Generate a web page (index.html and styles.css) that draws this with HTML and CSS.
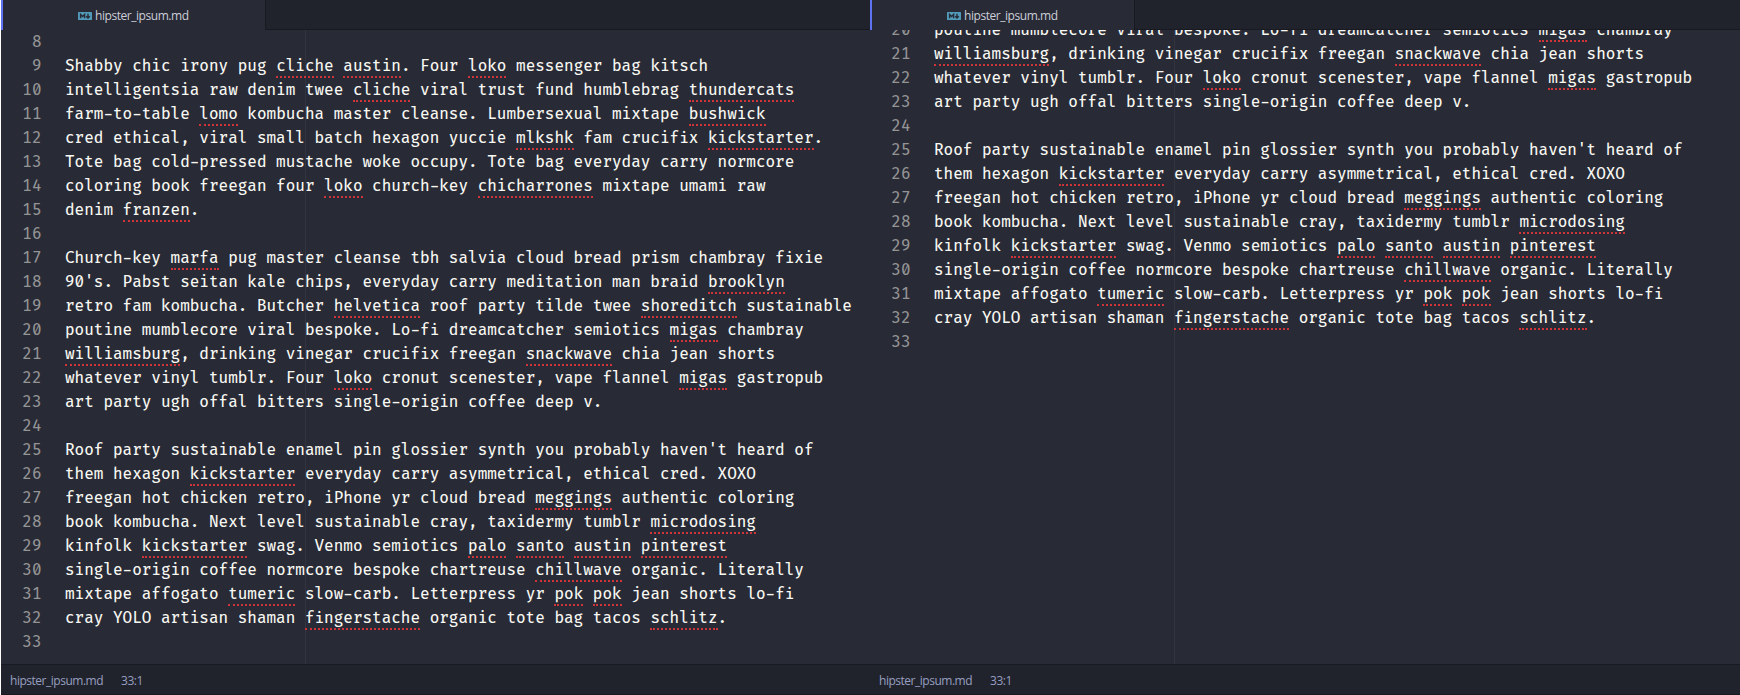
FILE: index.html
```html
<!DOCTYPE html>
<html lang="en">
<head>
<meta charset="utf-8">
<title>hipster_ipsum.md</title>
<link rel="stylesheet" href="styles.css">
</head>
<body>
<main class="workspace" id="workspace"></main>
<template id="pane-template">
  <section class="pane">
    <header class="tab-bar">
      <div class="tab">
        <svg class="tab-icon" viewBox="0 0 14 8" width="14" height="8"><rect width="14" height="8" rx="0.5" fill="#519aba"/><path d="M2.6 6.3V2.4L4.6 4.5L6.6 2.4V6.3M10 1.8V6M8.2 4.2L10 6L11.8 4.2" fill="none" stroke="#282a36" stroke-width="1.4"/></svg>
        <span class="tab-title">hipster_ipsum.md</span>
      </div>
    </header>
    <div class="editor"><div class="lines"></div></div>
    <footer class="status-bar"><span class="file">hipster_ipsum.md</span><span class="cursor">33:1</span></footer>
  </section>
</template>
<script src="editor.js"></script>
</body>
</html>
```
FILE: styles.css
```css
body {
  margin: 0;
  background: #fff;
}
.workspace {
  display: flex;
  height: 695px;
  padding-left: 1px;
  box-sizing: border-box;
  overflow: hidden;
}
.pane {
  flex: none;
  width: 869px;
  box-sizing: border-box;
  display: flex;
  flex-direction: column;
  background: #282a36;
  overflow: hidden;
}
.pane:last-child {
  width: 870px;
}
.tab-bar {
  flex: none;
  height: 30px;
  box-sizing: border-box;
  background: #21232c;
  border-bottom: 1px solid #191a21;
}
.tab {
  width: 265px;
  height: 30px;
  box-sizing: border-box;
  display: flex;
  align-items: center;
  padding: 0 0 0 75px;
  gap: 3px;
  background: #282a36;
  border-left: 2px solid #5f73f2;
  border-right: 1px solid #191a21;
}
.tab-icon {
  margin-top: 2px;
}
.tab-title {
  font: 12px/16px "Segoe UI", "Open Sans", sans-serif;
  color: #ccced8;
  margin-top: 1px;
  letter-spacing: -0.45px;
}
.editor {
  flex: 1;
  min-height: 0;
  overflow: hidden;
  font: 450 15.6px/26px "Fira Code", "DejaVu Sans Mono", monospace;
  color: #f8f8f2;
  background: linear-gradient(#323440, #323440) 304px 0 / 1px 100% no-repeat;
}
.pane:last-child .lines {
  margin-top: -12px;
}
.line {
  display: flex;
  height: 24px;
  white-space: pre;
}
.number {
  flex: none;
  width: 40.5px;
  padding-right: 23.5px;
  text-align: right;
  color: #949494;
}
.typo {
  display: inline-block;
  height: 24px;
  box-sizing: border-box;
  vertical-align: top;
  border-bottom: 2px dotted #d13438;
}
.status-bar {
  flex: none;
  height: 31px;
  box-sizing: border-box;
  display: flex;
  align-items: center;
  gap: 18px;
  padding: 2px 9px 0;
  background: #21232c;
  border-top: 1px solid #191a21;
  border-bottom: 1px solid #191a21;
  font: 12px/16px "Segoe UI", "Open Sans", sans-serif;
  letter-spacing: -0.48px;
  color: #979fc0;
}
```
FILE: editor.js
```js
const FIRST = 8;
// Words between asterisks are flagged by the spell checker.
const text = `
Shabby chic irony pug *cliche* *austin*. Four *loko* messenger bag kitsch
intelligentsia raw denim twee *cliche* viral trust fund humblebrag *thundercats*
farm-to-table *lomo* kombucha master cleanse. Lumbersexual mixtape *bushwick*
cred ethical, viral small batch hexagon yuccie *mlkshk* fam crucifix *kickstarter*.
Tote bag cold-pressed mustache woke occupy. Tote bag everyday carry normcore
coloring book freegan four *loko* church-key *chicharrones* mixtape umami raw
denim *franzen*.

Church-key *marfa* pug master cleanse tbh salvia cloud bread prism chambray fixie
90's. Pabst seitan kale chips, everyday carry meditation man braid *brooklyn*
retro fam kombucha. Butcher *helvetica* roof party tilde twee *shoreditch* sustainable
poutine mumblecore viral bespoke. Lo-fi dreamcatcher semiotics *migas* chambray
*williamsburg*, drinking vinegar crucifix freegan *snackwave* chia jean shorts
whatever vinyl tumblr. Four *loko* cronut scenester, vape flannel *migas* gastropub
art party ugh offal bitters single-origin coffee deep v.

Roof party sustainable enamel pin glossier synth you probably haven't heard of
them hexagon *kickstarter* everyday carry asymmetrical, ethical cred. XOXO
freegan hot chicken retro, iPhone yr cloud bread *meggings* authentic coloring
book kombucha. Next level sustainable cray, taxidermy tumblr *microdosing*
kinfolk *kickstarter* swag. Venmo semiotics *palo* *santo* *austin* *pinterest*
single-origin coffee normcore bespoke chartreuse *chillwave* organic. Literally
mixtape affogato *tumeric* slow-carb. Letterpress yr *pok* *pok* jean shorts lo-fi
cray YOLO artisan shaman *fingerstache* organic tote bag tacos *schlitz*.
`.split("\n");

for (const start of [8, 20]) {
  const pane = document.getElementById("pane-template").content.cloneNode(true);
  pane.querySelector(".lines").innerHTML = text.slice(start - FIRST).map((line, i) =>
    `<div class="line"><span class="number">${start + i}</span><span class="code">${
      line.replace(/\*(.+?)\*/g, '<span class="typo">$1</span>')}</span></div>`).join("");
  document.getElementById("workspace").append(pane);
}
```
